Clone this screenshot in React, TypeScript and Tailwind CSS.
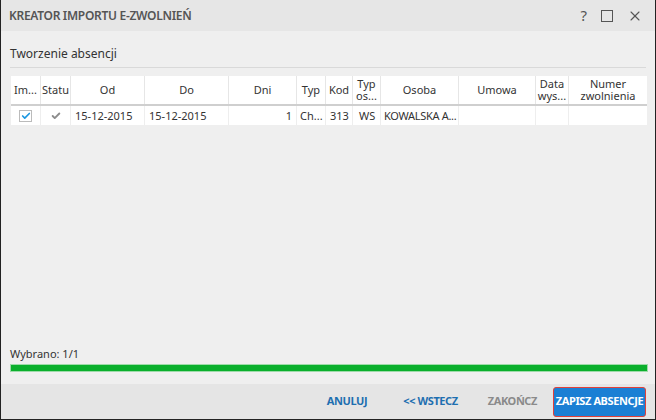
import { Check, X } from "lucide-react";

const cols = [
  "Im...",
  "Statu",
  "Od",
  "Do",
  "Dni",
  "Typ",
  "Kod",
  "Typ\nos...",
  "Osoba",
  "Umowa",
  "Data\nwys...",
  "Numer\nzwolnienia",
];

const gridCols =
  "grid grid-cols-[30px_30px_74px_84px_68px_29px_27px_28px_78px_77px_33px_78px]";

function HeaderCell({ label }: { label: string }) {
  const lines = label.split("\n");
  return (
    <div className="flex flex-col items-center justify-center overflow-hidden whitespace-nowrap border-r border-[#e6e6e6] text-center leading-[12px] last:border-r-0">
      {lines.map((l) => (
        <span key={l}>{l}</span>
      ))}
    </div>
  );
}

export default function App() {
  return (
    <div
      className="flex h-[420px] w-[656px] flex-col border-x border-b border-[#222] bg-[#efefef] text-[#333]"
      style={{ fontFamily: '"Noto Sans", "Open Sans", sans-serif' }}
    >
      <div className="flex h-[31px] items-center justify-between bg-[#e6e6e6] pl-[8px] pr-[12px]">
        <span className="text-[12px] font-semibold tracking-[-0.3px] text-[#555]">
          KREATOR IMPORTU E-ZWOLNIEŃ
        </span>
        <div className="flex items-center gap-[14px] text-[#555]">
          <span className="text-[15px] leading-none">?</span>
          <span className="block h-[12px] w-[12px] border-[1.5px] border-[#555]" />
          <X size={16} strokeWidth={1.6} />
        </div>
      </div>

      <div className="flex flex-1 flex-col px-[9px]">
        <div className="border-b border-[#d9d9d9] pb-[5px] pt-[15px] text-[12px] leading-[16px]">
          Tworzenie absencji
        </div>

        <div className="ml-[1px] mt-[8px] w-[636px] bg-white text-[11px]">
          <div className={`${gridCols} h-[30px] border-b-2 border-[#cfcfcf]`}>
            {cols.map((c) => (
              <HeaderCell key={c} label={c} />
            ))}
          </div>
          <div className={`${gridCols} h-[19px] items-stretch whitespace-nowrap leading-[19px]`}>
            <div className="flex items-center justify-center border-r border-[#eee]">
              <span className="flex h-[12px] w-[13px] items-center justify-center border border-[#bbb] bg-white">
                <Check size={10} strokeWidth={4} className="text-[#1c97e0]" />
              </span>
            </div>
            <div className="flex items-center justify-center border-r border-[#eee]">
              <Check size={10} strokeWidth={4.5} className="text-[#8c8c8c]" />
            </div>
            <div className="border-r border-[#eee] pl-[4px]">15-12-2015</div>
            <div className="border-r border-[#eee] pl-[4px]">15-12-2015</div>
            <div className="border-r border-[#eee] pr-[4px] text-right">1</div>
            <div className="overflow-hidden border-r border-[#eee] pl-[3px]">Ch...</div>
            <div className="border-r border-[#eee] pl-[4px]">313</div>
            <div className="border-r border-[#eee] pl-[6px]">WS</div>
            <div className="overflow-hidden border-r border-[#eee] pl-[3px] tracking-[-0.3px]">
              KOWALSKA A...
            </div>
            <div className="border-r border-[#eee]" />
            <div className="border-r border-[#eee]" />
            <div />
          </div>
        </div>

        <div className="mt-auto text-[11px] leading-[14px]">Wybrano: 1/1</div>
        <div className="mb-[12px] mt-[3px] h-[8px] w-[638px] border border-[#9edba9] bg-[#0aaf2c]" />
      </div>

      <div className="flex h-[35px] items-center justify-end whitespace-nowrap bg-[#e5e5e5] pr-[9px] text-[11px] font-bold tracking-[-0.4px]">
        <span className="mr-[36px] text-[#1e6fb0]">ANULUJ</span>
        <span className="mr-[30px] text-[#1e6fb0]">&lt;&lt; WSTECZ</span>
        <span className="mr-[16px] text-[#8a8a8a]">ZAKOŃCZ</span>
        <span className="flex h-[30px] w-[93px] items-center justify-center rounded-[3px] border border-[#e0403a] bg-[#1b7fd4] text-white">
          ZAPISZ ABSENCJE
        </span>
      </div>
    </div>
  );
}
